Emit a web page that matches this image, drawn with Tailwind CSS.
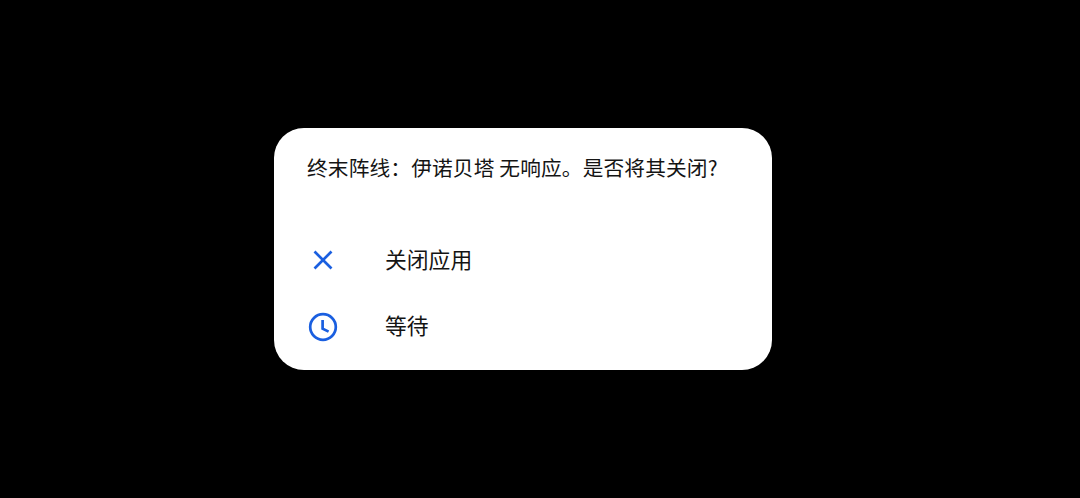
<!DOCTYPE html>
<html><head><meta charset="utf-8"><script src="https://cdn.jsdelivr.net/npm/@tailwindcss/browser@4"></script></head>
<body class="m-0 bg-black">
<div class="w-[1080px] h-[498px] bg-black flex items-center justify-center font-['Noto_Sans_CJK_SC','Roboto',sans-serif]">
<div class="w-[498px] h-[242px] mr-[34px] bg-white rounded-[30px] flex flex-col text-[#141414]">
<div class="pl-[33px] pt-[25px] h-[100px] text-[20.7px] tracking-[0.15px] leading-[28px] whitespace-nowrap">终末阵线：伊诺贝塔 无响应。是否将其关闭?</div>
<div class="h-[66px] flex items-center pl-[33px] -mt-[2px]">
<svg class="w-[32px] h-[32px] mr-[46px] translate-y-[1px]" viewBox="0 0 32 32" fill="none" stroke="#1a5fe0" stroke-width="2.7"><path d="M7.5 7.5l17 17M24.5 7.5l-17 17"/></svg>
<span class="text-[21.8px] leading-[28px]">关闭应用</span></div>
<div class="h-[66px] flex items-center pl-[33px]">
<svg class="w-[32px] h-[32px] mr-[46px] translate-y-[2px]" viewBox="0 0 32 32" fill="none" stroke="#1a5fe0" stroke-width="2.7"><circle cx="16" cy="16" r="12.8"/><path d="M15.6 9V17.6L21.6 20.6"/></svg>
<span class="text-[21.8px] leading-[28px]">等待</span></div>
</div></div>
</body></html>
